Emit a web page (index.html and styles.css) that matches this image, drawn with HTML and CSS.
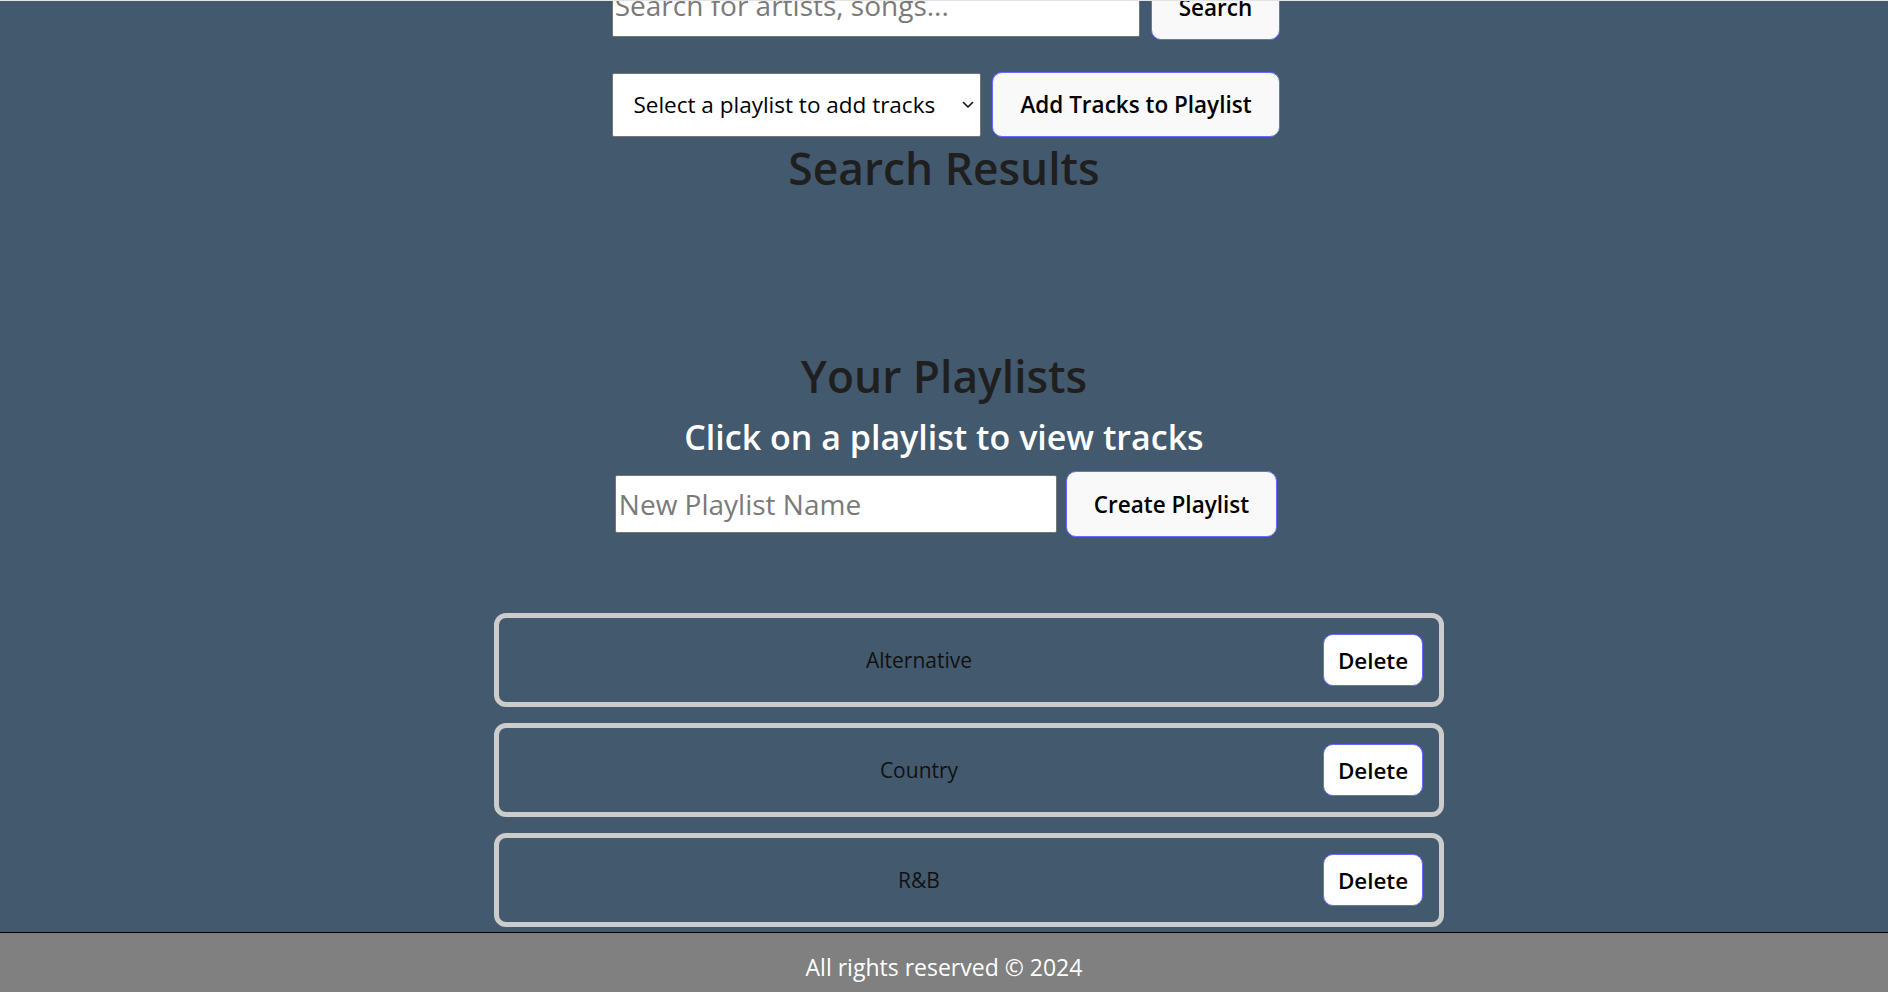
FILE: index.html
```html
<!DOCTYPE html>
<html lang="en">
<head>
<meta charset="utf-8">
<title>Playlists</title>
<link rel="stylesheet" href="styles.css">
</head>
<body>
<div class="topline"></div>
<main class="page">
  <div class="row search-row">
    <input class="field search-field" type="text" placeholder="Search for artists, songs...">
    <button class="btn btn-search">Search</button>
  </div>
  <div class="row select-row">
    <span class="select-wrap">
      <select class="select">
        <option>Select a playlist to add tracks</option>
      </select>
      <svg class="chev" width="12" height="8" viewBox="0 0 12 8"><path d="M1.5 1.5 L6 6 L10.5 1.5" fill="none" stroke="#111" stroke-width="1.6" stroke-linecap="round" stroke-linejoin="round"/></svg>
    </span>
    <button class="btn btn-add">Add Tracks to Playlist</button>
  </div>
  <h2 class="heading">Search Results</h2>
  <div class="results"></div>
  <h2 class="heading">Your Playlists</h2>
  <h3 class="sub">Click on a playlist to view tracks</h3>
  <div class="row create-row">
    <input class="field new-field" type="text" placeholder="New Playlist Name">
    <button class="btn btn-create">Create Playlist</button>
  </div>
  <ul class="playlists">
    <li class="card"><span class="card-name">Alternative</span><button class="btn-del">Delete</button></li>
    <li class="card"><span class="card-name">Country</span><button class="btn-del">Delete</button></li>
    <li class="card"><span class="card-name">R&amp;B</span><button class="btn-del">Delete</button></li>
  </ul>
</main>
<footer class="footer">All rights reserved © 2024</footer>
</body>
</html>
```
FILE: styles.css
```css
html, body {
  margin: 0;
  padding: 0;
}
body {
  background: #43596e;
  font-family: "Open Sans", "Noto Sans", sans-serif;
  color: #1e1e1e;
  overflow: hidden;
  height: 992px;
}
.topline {
  position: fixed;
  top: 0;
  left: 0;
  right: 0;
  height: 1px;
  background: #e4e4e4;
  z-index: 5;
}
.page {
  display: flex;
  flex-direction: column;
  align-items: center;
  padding-bottom: 70px;
}
.row {
  display: flex;
  align-items: center;
  justify-content: center;
}
.search-row {
  margin-top: -30px;
  gap: 11px;
  padding-left: 4px;
}
.select-row {
  margin-top: 32px;
  gap: 11px;
  padding-left: 4px;
}
.create-row {
  margin-top: 14px;
  gap: 9px;
  padding-left: 4px;
}
.field {
  box-sizing: border-box;
  height: 58px;
  border: 1px solid #767676;
  border-radius: 2px;
  background: #fff;
  font-family: "Open Sans", sans-serif;
  font-size: 28px;
  padding: 0 2px;
  color: #000;
  outline: none;
}
.field::placeholder {
  color: #7a7a7a;
}
.search-field { width: 528px; height: 64px; }
.new-field { width: 442px; padding-left: 3px; }
.btn {
  box-sizing: border-box;
  height: 66px;
  padding: 0 27px;
  border: 1px solid #646cff;
  border-radius: 10px;
  background: #f9f9f9;
  color: #000;
  font-family: "Open Sans", sans-serif;
  font-weight: 600;
  font-size: 22.5px;
  cursor: pointer;
}
.btn-search { height: 70px; padding-top: 4px; }
.btn-add { height: 65px; }
.select-wrap {
  position: relative;
  display: inline-flex;
}
.select {
  box-sizing: border-box;
  width: 369px;
  height: 64px;
  appearance: none;
  -webkit-appearance: none;
  border: 1px solid #767676;
  border-radius: 2px;
  background: #fff;
  color: #000;
  font-family: "Open Sans", sans-serif;
  font-size: 22.5px;
  padding: 0 0 0 20px;
}
.chev {
  position: absolute;
  right: 7px;
  top: 28px;
  pointer-events: none;
}
.heading {
  margin: 0;
  font-size: 44.3px;
  line-height: 62px;
  font-weight: 600;
  color: #1f1f1f;
  text-align: center;
}
.results {
  height: 146px;
}
.sub {
  margin: 10px 0 0;
  font-size: 34px;
  line-height: 40px;
  font-weight: 600;
  color: #fff;
  text-align: center;
}
.playlists {
  list-style: none;
  box-sizing: border-box;
  width: 1000px;
  margin: 76px 0 0;
  padding: 0 0 0 50px;
  display: flex;
  flex-direction: column;
  gap: 16px;
}
.card {
  box-sizing: border-box;
  height: 94px;
  border: 5px solid #cccccc;
  border-radius: 12px;
  display: flex;
  align-items: center;
  padding: 0 16px;
}
.card-name {
  flex: 1;
  text-align: center;
  font-size: 21px;
  color: #111;
}
.btn-del {
  box-sizing: border-box;
  width: 100px;
  height: 52px;
  border: 1px solid #646cff;
  border-radius: 10px;
  background: #ffffff;
  color: #000;
  font-family: "Open Sans", sans-serif;
  font-weight: 600;
  font-size: 22.4px;
  padding: 0;
  cursor: pointer;
}
.footer {
  position: fixed;
  left: 0;
  right: 0;
  bottom: 0;
  box-sizing: border-box;
  height: 60px;
  border-top: 1px solid #000;
  background: #808080;
  color: #fff;
  font-size: 23px;
  display: flex;
  align-items: center;
  justify-content: center;
  padding-top: 8px;
}
```
